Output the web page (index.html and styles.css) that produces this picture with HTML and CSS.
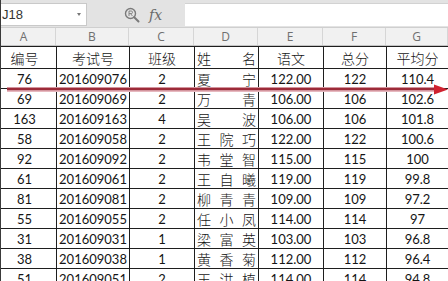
FILE: index.html
```html
<!DOCTYPE html>
<html lang="zh-CN">
<head>
    <meta charset="UTF-8">
    <meta name="viewport" content="width=device-width, initial-scale=1.0">
    <title>成绩表</title>
    <link rel="stylesheet" href="styles.css">
</head>
<body>
    <div class="screen">
        <div class="toolbar">
            <div class="namebox">
                <span>J18</span>
                <span class="caret"></span>
            </div>
            <div class="tools">
                <svg class="zoom-icon" width="16" height="16" viewBox="0 0 16 16">
                    <circle cx="6.5" cy="6.5" r="5" fill="none" stroke="#7a7a7a" stroke-width="1.4"/>
                    <path d="M10.2 10.2 L14.5 14.5" stroke="#7a7a7a" stroke-width="2" stroke-linecap="round"/>
                    <path d="M5 9 V4 H7.2 A1.3 1.3 0 0 1 7.2 6.6 H5 M6.6 6.6 L8.4 9" fill="none" stroke="#7a7a7a" stroke-width="0.9"/>
                </svg>
                <span class="fx">fx</span>
            </div>
            <div class="formula"></div>
        </div>

        <div class="colheads">
            <span class="w-a">A</span>
            <span class="w-b">B</span>
            <span class="w-c">C</span>
            <span class="w-d">D</span>
            <span class="w-e">E</span>
            <span class="w-f">F</span>
            <span class="w-g">G</span>
            <span class="w-h"></span>
        </div>

        <table class="sheet">
            <colgroup>
                <col class="w-a"><col class="w-b"><col class="w-c"><col class="w-d">
                <col class="w-e"><col class="w-f"><col class="w-g"><col class="w-h">
            </colgroup>
            <thead>
                <tr>
                    <th>编号</th>
                    <th>考试号</th>
                    <th>班级</th>
                    <th><div class="spread"><span>姓</span><span>名</span></div></th>
                    <th>语文</th>
                    <th>总分</th>
                    <th>平均分</th>
                    <th></th>
                </tr>
            </thead>
            <tbody id="rows"></tbody>
        </table>

        <svg class="arrow" width="448" height="14" viewBox="0 0 448 14">
            <line x1="6" y1="6.5" x2="436" y2="6.5" stroke="#e6b8bf" stroke-width="5"/>
            <line x1="6" y1="6" x2="436" y2="6" stroke="#9c2a38" stroke-width="2.4"/>
            <polygon points="433,1.5 447,6.5 433,11.5" fill="#cf2230"/>
        </svg>
    </div>

    <script>
        const rows = [
            ['76', '201609076', '2', '夏宁', '122.00', '122', '110.4'],
            ['69', '201609069', '2', '万青', '106.00', '106', '102.6'],
            ['163', '201609163', '4', '吴波', '106.00', '106', '101.8'],
            ['58', '201609058', '2', '王院巧', '122.00', '122', '100.6'],
            ['92', '201609092', '2', '韦堂智', '115.00', '115', '100'],
            ['61', '201609061', '2', '王自曦', '119.00', '119', '99.8'],
            ['81', '201609081', '2', '柳青青', '109.00', '109', '97.2'],
            ['55', '201609055', '2', '任小凤', '114.00', '114', '97'],
            ['31', '201609031', '1', '梁富英', '103.00', '103', '96.8'],
            ['38', '201609038', '1', '黄香菊', '112.00', '112', '96.4'],
            ['51', '201609051', '2', '王洪植', '114.00', '114', '94.8']
        ];

        const body = document.getElementById('rows');

        rows.forEach(r => {
            const tr = document.createElement('tr');
            const name = r[3].split('').map(ch => `<span>${ch}</span>`).join('');
            tr.innerHTML = `
                <td>${r[0]}</td>
                <td>${r[1]}</td>
                <td>${r[2]}</td>
                <td class="name"><div class="spread">${name}</div></td>
                <td>${r[4]}</td>
                <td>${r[5]}</td>
                <td>${r[6]}</td>
                <td></td>
            `;
            body.appendChild(tr);
        });
    </script>
</body>
</html>
```

FILE: styles.css
```css
body {
    margin: 0;
    background: #fff;
    font-family: Lato, "Noto Sans CJK SC", sans-serif;
    overflow: hidden;
}
.screen {
    position: relative;
    width: 448px;
    height: 281px;
    overflow: hidden;
    border-left: 1px solid #3a3a3a;
    box-sizing: border-box;
}

/* formula bar */
.toolbar {
    display: flex;
    height: 28px;
    padding-top: 3px;
    box-sizing: border-box;
    background: #e3e3e3;
    border-bottom: 1px solid #cfcfcf;
}
.namebox {
    width: 86px;
    height: 23px;
    background: #fff;
    border: 1px solid #c9c9c9;
    border-left: none;
    display: flex;
    align-items: center;
    justify-content: space-between;
    padding: 0 5px 0 1px;
    box-sizing: border-box;
    font-family: "Liberation Sans", sans-serif;
    font-size: 13px;
    color: #333;
}
.caret {
    width: 0;
    height: 0;
    border-left: 2.5px solid transparent;
    border-right: 2.5px solid transparent;
    border-top: 3px solid #777;
}
.tools {
    width: 98px;
    display: flex;
    align-items: center;
    padding-left: 37px;
    gap: 9px;
    box-sizing: border-box;
}
.fx {
    font-family: "DejaVu Serif", serif;
    font-style: italic;
    font-size: 14px;
    color: #6a6a6a;
}
.formula {
    flex: 1;
    height: 23px;
    background: #fff;
    border-top: 1px solid #d2d2d2;
    box-sizing: border-box;
}

/* column letters */
.colheads {
    display: flex;
    margin-left: -9px;
    height: 17px;
    background: #f1f1f1;
    border-bottom: 1px solid #c4c4c4;
}
.colheads span {
    flex: none;
    text-align: center;
    line-height: 17px;
    font-family: "Open Sans", sans-serif;
    font-size: 12px;
    color: #6f6f6f;
    border-right: 1px solid #d6d6d6;
    box-sizing: border-box;
}
.w-a { width: 64px; }
.w-b { width: 73px; }
.w-c { width: 65px; }
.w-d { width: 64px; }
.w-e { width: 65px; }
.w-f { width: 63px; }
.w-g { width: 62px; }
.w-h { width: 40px; }

/* grid */
.sheet {
    margin-left: -9px;
    border-collapse: collapse;
    table-layout: fixed;
    width: 496px;
    color: #151515;
}
.sheet th,
.sheet td {
    border: 1px solid #1e1e1e;
    padding: 0;
    text-align: center;
    white-space: nowrap;
    overflow: hidden;
}
.sheet th {
    height: 21px;
    font-family: "Noto Sans CJK SC", sans-serif;
    font-weight: 300;
    font-size: 14px;
}
.sheet td {
    height: 19px;
    font-size: 13px;
}
.sheet .name {
    font-family: "Noto Sans CJK SC", sans-serif;
    font-weight: 300;
    font-size: 14px;
}
.spread {
    display: flex;
    justify-content: space-between;
    padding: 0 2px;
    line-height: 18px;
}

.arrow {
    position: absolute;
    left: 0;
    top: 83px;
}
```
